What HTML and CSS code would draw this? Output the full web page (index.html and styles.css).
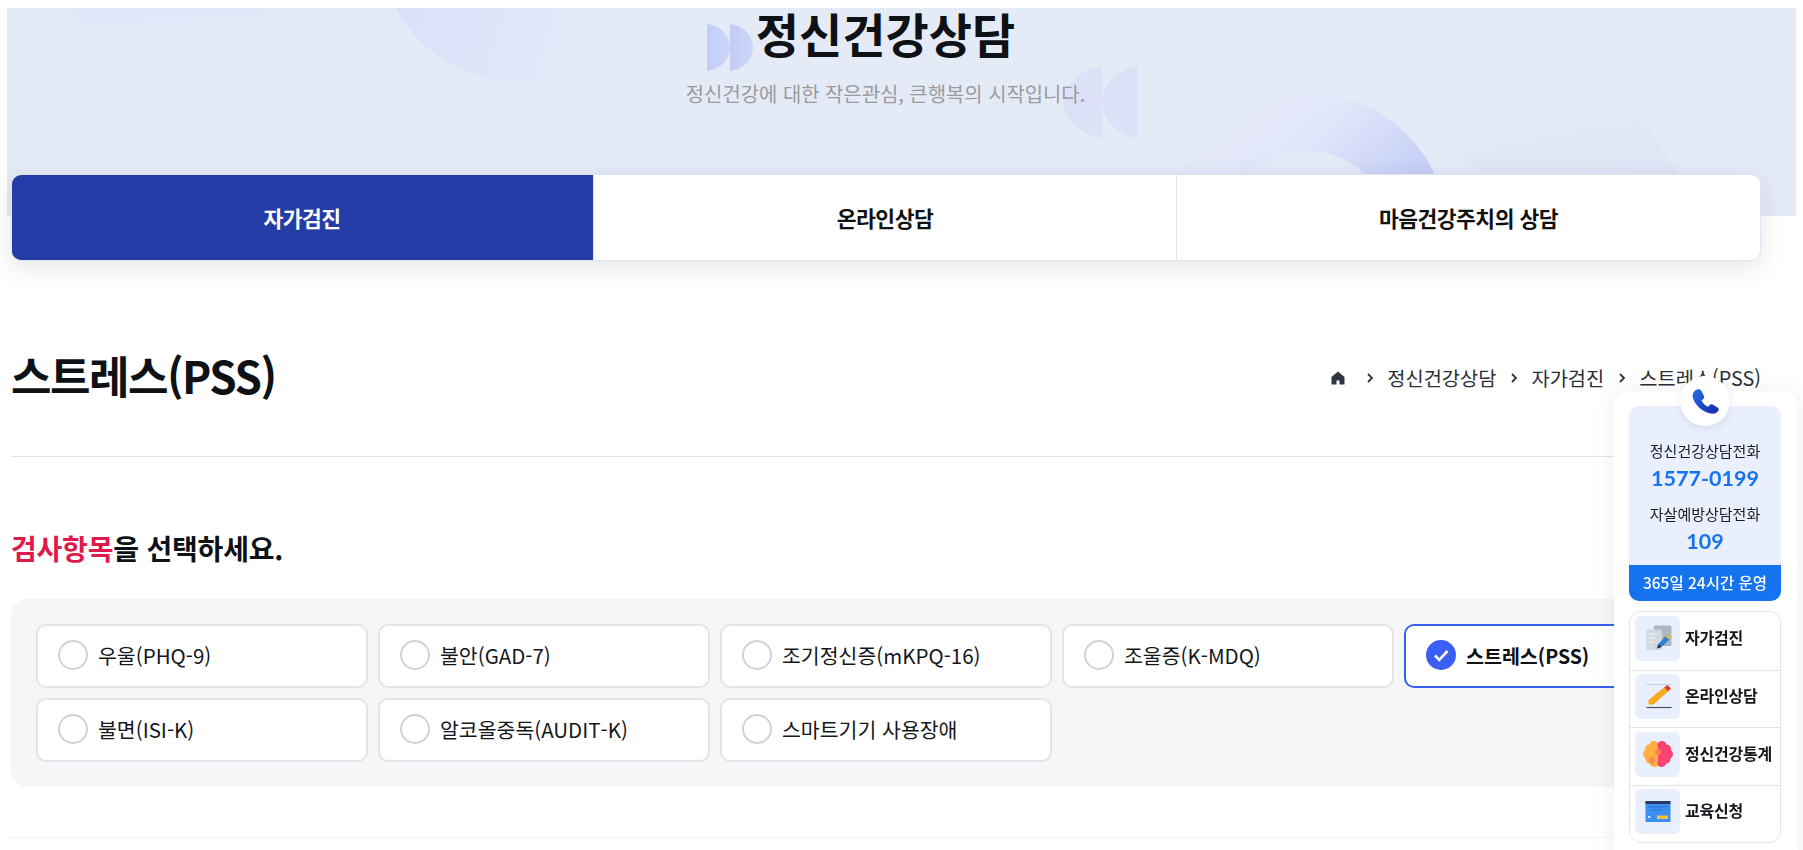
FILE: index.html
```html
<!DOCTYPE html>
<html lang="ko">
<head>
<meta charset="utf-8">
<title>스트레스(PSS)</title>
<link rel="stylesheet" href="styles.css">
</head>
<body>
<div class="page">
  <header class="hero">
    <svg class="hero-art" viewBox="0 0 1789 208" width="1789" height="208" aria-hidden="true">
      <defs>
        <linearGradient id="blob" x1="0" y1="0.3" x2="1" y2="0.6"><stop offset="0" stop-color="#d6dffa"/><stop offset="0.9" stop-color="#e5eaf8"/></linearGradient>
        <linearGradient id="ring" x1="0" y1="0.15" x2="1" y2="0.75"><stop offset="0" stop-color="#e5eaf7"/><stop offset="0.45" stop-color="#e2e6fa"/><stop offset="1" stop-color="#bac6f6"/></linearGradient>
        <linearGradient id="faint" x1="0" y1="0" x2="0.5" y2="1"><stop offset="0" stop-color="#e5eaf7"/><stop offset="1" stop-color="#dfe4f7"/></linearGradient>
        <linearGradient id="faint2" x1="0" y1="0" x2="0.3" y2="1"><stop offset="0" stop-color="#dfe6f9"/><stop offset="1" stop-color="#e5eaf7"/></linearGradient>
        <linearGradient id="dee" x1="0" y1="0" x2="1" y2="0"><stop offset="0" stop-color="#c2cdf6"/><stop offset="1" stop-color="#cdd6f6"/></linearGradient>
      </defs>
      <path d="M59 0 L85 25 Q200 28 299 40 L258 0Z" fill="url(#faint2)"/>
      <circle cx="513" cy="-68" r="142" fill="url(#blob)"/>
      <path d="M1162 208 L1162 224 A139 139 0 0 1 1440 224 L1382 224 A81 81 0 0 0 1220 224Z" fill="url(#ring)"/>
      <path d="M1421 97 Q1530 118 1636 112 L1700 208 L1500 208Z" fill="url(#faint)"/>
      <path d="M700 16 C716 18 723 30 723 39.500 C723 49 716 61 700 63Z" fill="url(#dee)"/>
      <path d="M723 16 C739 18 746 30 746 39.500 C746 49 739 61 723 63Z" fill="url(#dee)"/>
      <path d="M1095 58 C1068 62 1056 82 1056 94 C1056 106 1068 126 1095 130Z" fill="#dce1f7"/>
      <path d="M1130 58 C1105 62 1095 82 1095 94 C1095 106 1105 126 1130 130Z" fill="#dce1f7"/>
    </svg>
    <div class="hero-text">
      <h1 class="hero-title">정신건강상담</h1>
      <p class="hero-sub">정신건강에 대한 작은관심, 큰행복의 시작입니다.</p>
    </div>
  </header>

  <main class="content">
    <nav class="tabs">
      <a class="tab tab-active">자가검진</a>
      <a class="tab">온라인상담</a>
      <a class="tab">마음건강주치의 상담</a>
    </nav>

    <div class="title-row">
      <h2 class="page-title">스트레스(PSS)</h2>
      <ol class="crumbs">
        <li class="crumb-home"><svg viewBox="0 0 14 14" width="14" height="14" aria-hidden="true"><path d="M7 .5 13.500 6V13.500H8.500V9.500H5.500V13.500H.5V6Z" fill="#2f3542"/></svg></li>
        <li class="crumb-sep"><svg viewBox="0 0 8 12" width="8" height="12" aria-hidden="true"><path d="M2 2 6 6 2 10" fill="none" stroke="#2f3542" stroke-width="1.800"/></svg></li>
        <li>정신건강상담</li>
        <li class="crumb-sep"><svg viewBox="0 0 8 12" width="8" height="12" aria-hidden="true"><path d="M2 2 6 6 2 10" fill="none" stroke="#2f3542" stroke-width="1.800"/></svg></li>
        <li>자가검진</li>
        <li class="crumb-sep"><svg viewBox="0 0 8 12" width="8" height="12" aria-hidden="true"><path d="M2 2 6 6 2 10" fill="none" stroke="#2f3542" stroke-width="1.800"/></svg></li>
        <li>스트레스(PSS)</li>
      </ol>
    </div>

    <h3 class="select-title"><em>검사항목</em>을 선택하세요.</h3>

    <div class="options">
      <label class="option"><span class="radio"></span>우울(PHQ-9)</label>
      <label class="option"><span class="radio"></span>불안(GAD-7)</label>
      <label class="option"><span class="radio"></span>조기정신증(mKPQ-16)</label>
      <label class="option"><span class="radio"></span>조울증(K-MDQ)</label>
      <label class="option option-on"><span class="radio radio-on"><svg viewBox="0 0 30 30" width="30" height="30" aria-hidden="true"><path d="M9 15.500 13.300 19.800 21.500 11" fill="none" stroke="#fff" stroke-width="2.600"/></svg></span>스트레스(PSS)</label>
      <label class="option"><span class="radio"></span>불면(ISI-K)</label>
      <label class="option"><span class="radio"></span>알코올중독(AUDIT-K)</label>
      <label class="option"><span class="radio"></span>스마트기기 사용장애</label>
    </div>
  </main>
</div>

<aside class="side">
  <span class="phone-badge"><svg viewBox="0 0 27 25" width="27" height="25" aria-hidden="true"><defs><linearGradient id="ph" x1="0" y1="0" x2="1" y2="1"><stop offset="0" stop-color="#2a6fe8"/><stop offset="1" stop-color="#1428a8"/></linearGradient></defs><path d="M5 .5C7-.2 8.500.5 9.500 2L12 7C12.600 8.300 12.200 9.400 11 10.200L9.500 11.200C11 14.500 13 16.500 16 17.800L17.500 16.200C18.500 15.200 19.700 15 21 15.800L25.500 18.500C27 19.500 27.200 21 26 22.200 24 24.500 21 25.300 17.500 24.300 9 22 2.500 15 .8 8.500 0 5 1.500 2 5 .5Z" fill="url(#ph)"/></svg></span>
  <section class="call">
    <div class="call-body">
      <p class="call-label">정신건강상담전화</p>
      <p class="call-num">1577-0199</p>
      <p class="call-label call-label-2">자살예방상담전화</p>
      <p class="call-num">109</p>
    </div>
    <div class="call-foot">365일 24시간 운영</div>
  </section>
  <ul class="quick">
    <li class="quick-item">
      <span class="tile"><svg viewBox="0 0 30 30" width="30" height="30" aria-hidden="true"><rect x="10.800" y="1.500" width="17.700" height="20.500" rx="1.500" fill="#a9b8c2"/><rect x="3.500" y="5.500" width="15.500" height="20.500" rx="1.500" fill="#d0d9dd"/><path d="M6 10H14M6 14H12M6 18H10" stroke="#e8eef0" stroke-width="1.500"/><path d="M24 10.500 28 14 18.500 23 14 24.500 15.500 20Z" fill="#2a7fd4"/><path d="M24 10.500 28 14 26.300 15.700 22.300 12.200Z" fill="#f1c232"/><path d="M14 24.500 15.500 20 18.500 23Z" fill="#263238"/></svg></span>
      <span class="quick-text">자가검진</span>
    </li>
    <li class="quick-item">
      <span class="tile"><svg viewBox="0 0 30 30" width="30" height="30" aria-hidden="true"><path d="M3.500 2.500H28.500" stroke="#c9ced6" stroke-width="1"/><path d="M3.500 25.500H28.500" stroke="#4a4f57" stroke-width="1.200"/><path d="M21 5.500 25 9.500 10.500 22.500H5.500V18Z" fill="#f9ab1e"/><path d="M24.500 3 28 6.500 25 9.500 21 5.500Z" fill="#e2402f"/></svg></span>
      <span class="quick-text">온라인상담</span>
    </li>
    <li class="quick-item">
      <span class="tile"><svg viewBox="0 0 30 30" width="30" height="30" aria-hidden="true"><g fill="#fdb03c"><circle cx="11" cy="6.500" r="4.500"/><circle cx="6.500" cy="10" r="4.500"/><circle cx="4.500" cy="15" r="4.500"/><circle cx="7" cy="20" r="4.500"/><circle cx="11.500" cy="24" r="4"/><rect x="7" y="6" width="8" height="20"/></g><g fill="#fb4372"><circle cx="19" cy="6.500" r="4.500"/><circle cx="23.500" cy="10" r="4.500"/><circle cx="25.500" cy="15" r="4.500"/><circle cx="23" cy="20" r="4.500"/><circle cx="18.500" cy="24" r="4"/><rect x="15" y="6" width="8" height="20"/></g><circle cx="9" cy="21" r="3.500" fill="#fc8f55"/><circle cx="15" cy="13" r="3" fill="#fc7f5c"/></svg></span>
      <span class="quick-text">정신건강통계</span>
    </li>
    <li class="quick-item">
      <span class="tile"><svg viewBox="0 0 30 30" width="30" height="30" aria-hidden="true"><rect x="2.500" y="4" width="25" height="21" fill="#3a8ff0"/><rect x="2.500" y="4" width="25" height="3" fill="#2b3a67"/><path d="M5 10H24M8 13H20" stroke="#2a71cf" stroke-width="1"/><rect x="14" y="18.500" width="11" height="3.500" fill="#f7c22f"/><rect x="5" y="19" width="2.500" height="2" fill="#cfe3fb"/></svg></span>
      <span class="quick-text">교육신청</span>
    </li>
  </ul>
</aside>
</body>
</html>
```

FILE: styles.css
```css
* { box-sizing: border-box; }
html, body {
  margin: 0;
  height: 850px;
  overflow: hidden;
  background: #fff;
}
body {
  font-family: "Noto Sans CJK KR", "Noto Sans", sans-serif;
  color: #0e1116;
}
h1, h2, h3, p, ol, ul { margin: 0; padding: 0; }
ol, ul { list-style: none; }

.page {
  margin: 8px 7px 12px 7px;
  height: 830px;
  border-bottom: 1px solid #f6f6f6;
}

.hero {
  position: relative;
  height: 208px;
  background: #e5eaf7;
}
.hero-art { position: absolute; left: 0; top: 0; }
.hero-text {
  position: relative;
  width: 1757px;
  text-align: center;
}
.hero-title {
  font-size: 47px;
  font-weight: 700;
  line-height: 50px;
  letter-spacing: 0;
  color: #0e1116;
}
.hero-sub {
  margin-top: 23px;
  font-size: 19.900px;
  font-weight: 400;
  line-height: 26px;
  color: #999b9e;
}

.content {
  position: relative;
  width: 1750px;
  margin: -42px 0 0 4px;
}

.tabs {
  display: grid;
  grid-template-columns: 581px 583px 1fr;
  height: 87px;
  background: #fff;
  border-radius: 10px;
  border: 1px solid #e0e3eb;
  box-shadow: 0 6px 24px rgba(40, 45, 70, .12);
  overflow: hidden;
}
.tab {
  display: flex;
  align-items: center;
  justify-content: center;
  font-size: 21.500px;
  font-weight: 700;
  letter-spacing: -.5px;
  color: #111;
  border-left: 1px solid #e3e5ea;
}
.tab:first-child { border-left: 0; }
.tab-active { background: #243ca6; color: #fff; margin: -1px 0 -1px -1px; }

.title-row {
  display: flex;
  align-items: center;
  justify-content: space-between;
  height: 196px;
  border-bottom: 1px solid #e3e3e3;
  padding-top: 48px;
  padding-bottom: 15px;
}
.page-title {
  font-size: 44px;
  font-weight: 700;
  letter-spacing: -1.500px;
  line-height: 56px;
}
.crumbs {
  display: flex;
  align-items: center;
  margin-top: 5px;
  font-size: 19.800px;
  color: #2c2f36;
}
.crumbs li { display: flex; align-items: center; }
.crumb-sep { margin: 0 13.500px; }
.crumb-home { margin-right: 7px; }

.select-title {
  margin-top: 71px;
  font-size: 28px;
  font-weight: 700;
  line-height: 40px;
  letter-spacing: -.2px;
}
.select-title em { font-style: normal; color: #e0194b; }

.options {
  display: grid;
  grid-template-columns: repeat(5, 1fr);
  gap: 10.500px 10px;
  margin-top: 31px;
  padding: 25px;
  border-radius: 16px;
  background: #f5f6f8;
}
.option {
  display: flex;
  align-items: center;
  gap: 10px;
  height: 63.500px;
  padding-left: 20px;
  padding-bottom: 1px;
  background: #fff;
  border: 2px solid #e2e4ea;
  border-radius: 10px;
  font-size: 20.500px;
  color: #14171c;
  white-space: nowrap;
}
.option-on {
  border-color: #3b5ef5;
  font-size: 19.500px;
  font-weight: 700;
  color: #0e1116;
}
.radio {
  flex: none;
  width: 30px;
  height: 30px;
  border: 2px solid #cfd2d8;
  border-radius: 50%;
  background: #fff;
}
.radio-on {
  border: 0;
  background: #3b5ef5;
}
.radio-on svg { display: block; }

.side {
  position: fixed;
  left: 1614px;
  top: 391px;
  width: 183px;
  height: 475px;
  padding: 15px 16px 15px 15px;
  background: #fff;
  border-radius: 14px 14px 0 0;
  box-shadow: 0 0 24px rgba(30, 40, 70, .08);
}
.phone-badge {
  position: absolute;
  left: 66px;
  top: -15px;
  width: 50px;
  height: 50px;
  display: flex;
  align-items: center;
  justify-content: center;
  border-radius: 50%;
  background: #fff;
  box-shadow: 0 2px 8px rgba(30, 40, 70, .1);
}
.call {
  height: 195px;
  border-radius: 10px;
  background: #e9effd;
  overflow: hidden;
  display: flex;
  flex-direction: column;
  text-align: center;
}
.call-body { flex: 1; padding-top: 34px; }
.call-label {
  font-size: 15px;
  line-height: 22px;
  color: #1b1d22;
}
.call-label-2 { margin-top: 11px; }
.call-num {
  font-family: "Lato", "Noto Sans CJK KR", sans-serif;
  font-size: 21.500px;
  font-weight: 700;
  line-height: 28px;
  margin-top: 2px;
  color: #1673f0;
}
.call-foot {
  height: 36px;
  line-height: 34px;
  background: #1673f0;
  color: #fff;
  font-size: 15.500px;
  font-weight: 500;
}

.quick {
  margin-top: 10px;
  border: 1px solid #e2e4ea;
  border-radius: 12px;
  background: #fff;
}
.quick-item {
  display: flex;
  align-items: center;
  gap: 5px;
  height: 57.500px;
  padding-left: 5px;
  padding-bottom: 4px;
  border-top: 1px solid #e2e4ea;
}
.quick-item:first-child { border-top: 0; }
.tile {
  flex: none;
  width: 45px;
  height: 45px;
  display: flex;
  align-items: center;
  justify-content: center;
  border-radius: 6px;
  background: #e9effd;
}
.quick-text {
  margin-bottom: 3px;
  font-size: 16px;
  font-weight: 700;
  letter-spacing: -.2px;
  color: #14171c;
  white-space: nowrap;
}
```
